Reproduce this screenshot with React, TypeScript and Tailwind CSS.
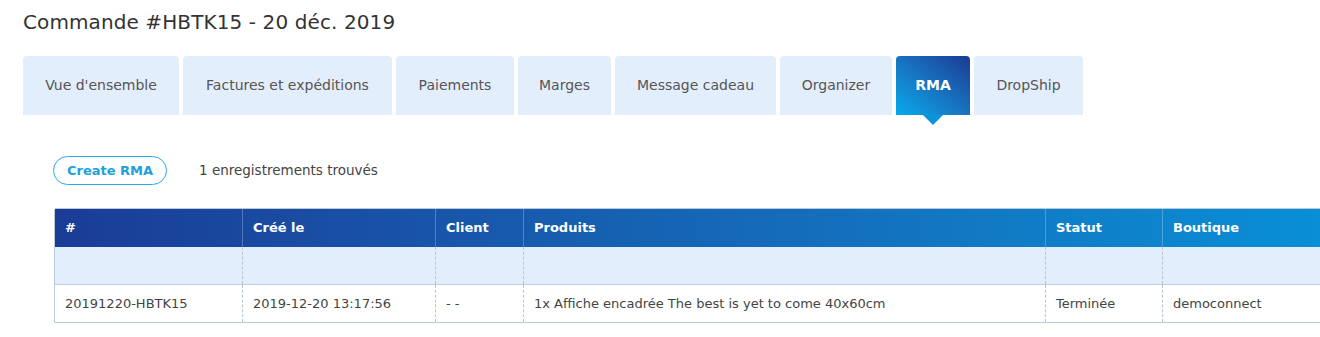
const tabs = [
  { label: "Vue d'ensemble", width: "w-[156px]" },
  { label: "Factures et expéditions", width: "w-[209px]" },
  { label: "Paiements", width: "w-[118px]" },
  { label: "Marges", width: "w-[93px]" },
  { label: "Message cadeau", width: "w-[161px]" },
  { label: "Organizer", width: "w-[112px]" },
  { label: "RMA", width: "w-[74px]" },
  { label: "DropShip", width: "w-[109px]" },
]

const columns = [
  { label: "#", width: "w-[187px]" },
  { label: "Créé le", width: "w-[193px]" },
  { label: "Client", width: "w-[88px]" },
  { label: "Produits", width: "w-[522px]" },
  { label: "Statut", width: "w-[117px]" },
  { label: "Boutique", width: "w-[220px]" },
]

const row = [
  "20191220-HBTK15",
  "2019-12-20 13:17:56",
  "- -",
  "1x Affiche encadrée The best is yet to come 40x60cm",
  "Terminée",
  "democonnect",
]

export default function App() {
  return (
    <div className="min-h-screen bg-white overflow-hidden font-['DejaVu_Sans',sans-serif] text-[#444]">
      <div className="pl-[23px] pt-[9px]">
        {/* Title */}
        <h1 className="text-[20px] leading-[26px] text-[#333] tracking-[0.1px]">Commande #HBTK15 - 20 déc. 2019</h1>

        {/* Tabs */}
        <div className="flex gap-[4px] mt-[21px]">
          {tabs.map((t) => {
            const active = t.label === "RMA"
            return (
              <div key={t.label} className="relative">
                <div
                  className={`${t.width} h-[59px] flex items-center justify-center rounded-t-[4px] text-[14px] ${
                    active
                      ? "bg-gradient-to-tr from-[#05abec] to-[#1b3a93] text-white font-bold"
                      : "bg-[#e3eefd] text-[#555]"
                  }`}
                >
                  {t.label}
                </div>
                {active && (
                  <div className="absolute left-1/2 -translate-x-1/2 top-[59px] w-0 h-0 border-l-[10px] border-r-[10px] border-t-[10px] border-l-transparent border-r-transparent border-t-[#0a94d9]" />
                )}
              </div>
            )
          })}
        </div>

        {/* Toolbar */}
        <div className="pl-[30px] mt-[41px] flex items-center gap-8">
          <button className="h-[29px] w-[114px] rounded-full border border-[#2aa9e8] text-[#1d9fe0] text-[13px] font-semibold">
            Create RMA
          </button>
          <span className="text-[13.5px] text-[#444]">1 enregistrements trouvés</span>
        </div>

        {/* Table */}
        <div className="pl-[31px] mt-[23px]">
          <div className="w-[1400px] border border-[#bdc9d9] rounded-tl-[2px]">
            <div className="flex h-[38px] bg-gradient-to-r from-[#1a3c96] to-[#0398dc] text-white text-[13px] font-bold">
              {columns.map((c, i) => (
                <div
                  key={c.label}
                  className={`${c.width} shrink-0 flex items-center px-[10px] ${i > 0 ? "border-l border-white/25" : ""}`}
                >
                  {c.label}
                </div>
              ))}
            </div>
            <div className="flex h-[38px] bg-[#e3eefd] border-b border-[#c0cdde]">
              {columns.map((c, i) => (
                <div
                  key={c.label}
                  className={`${c.width} shrink-0 ${i > 0 ? "border-l border-dashed border-[#b4c4d9]" : ""}`}
                />
              ))}
            </div>
            <div className="flex h-[37px] text-[13px] text-[#444]">
              {columns.map((c, i) => (
                <div
                  key={c.label}
                  className={`${c.width} shrink-0 flex items-center px-[10px] ${i > 0 ? "border-l border-dashed border-[#b4c4d9]" : ""}`}
                >
                  {row[i]}
                </div>
              ))}
            </div>
          </div>
        </div>
      </div>
    </div>
  )
}
